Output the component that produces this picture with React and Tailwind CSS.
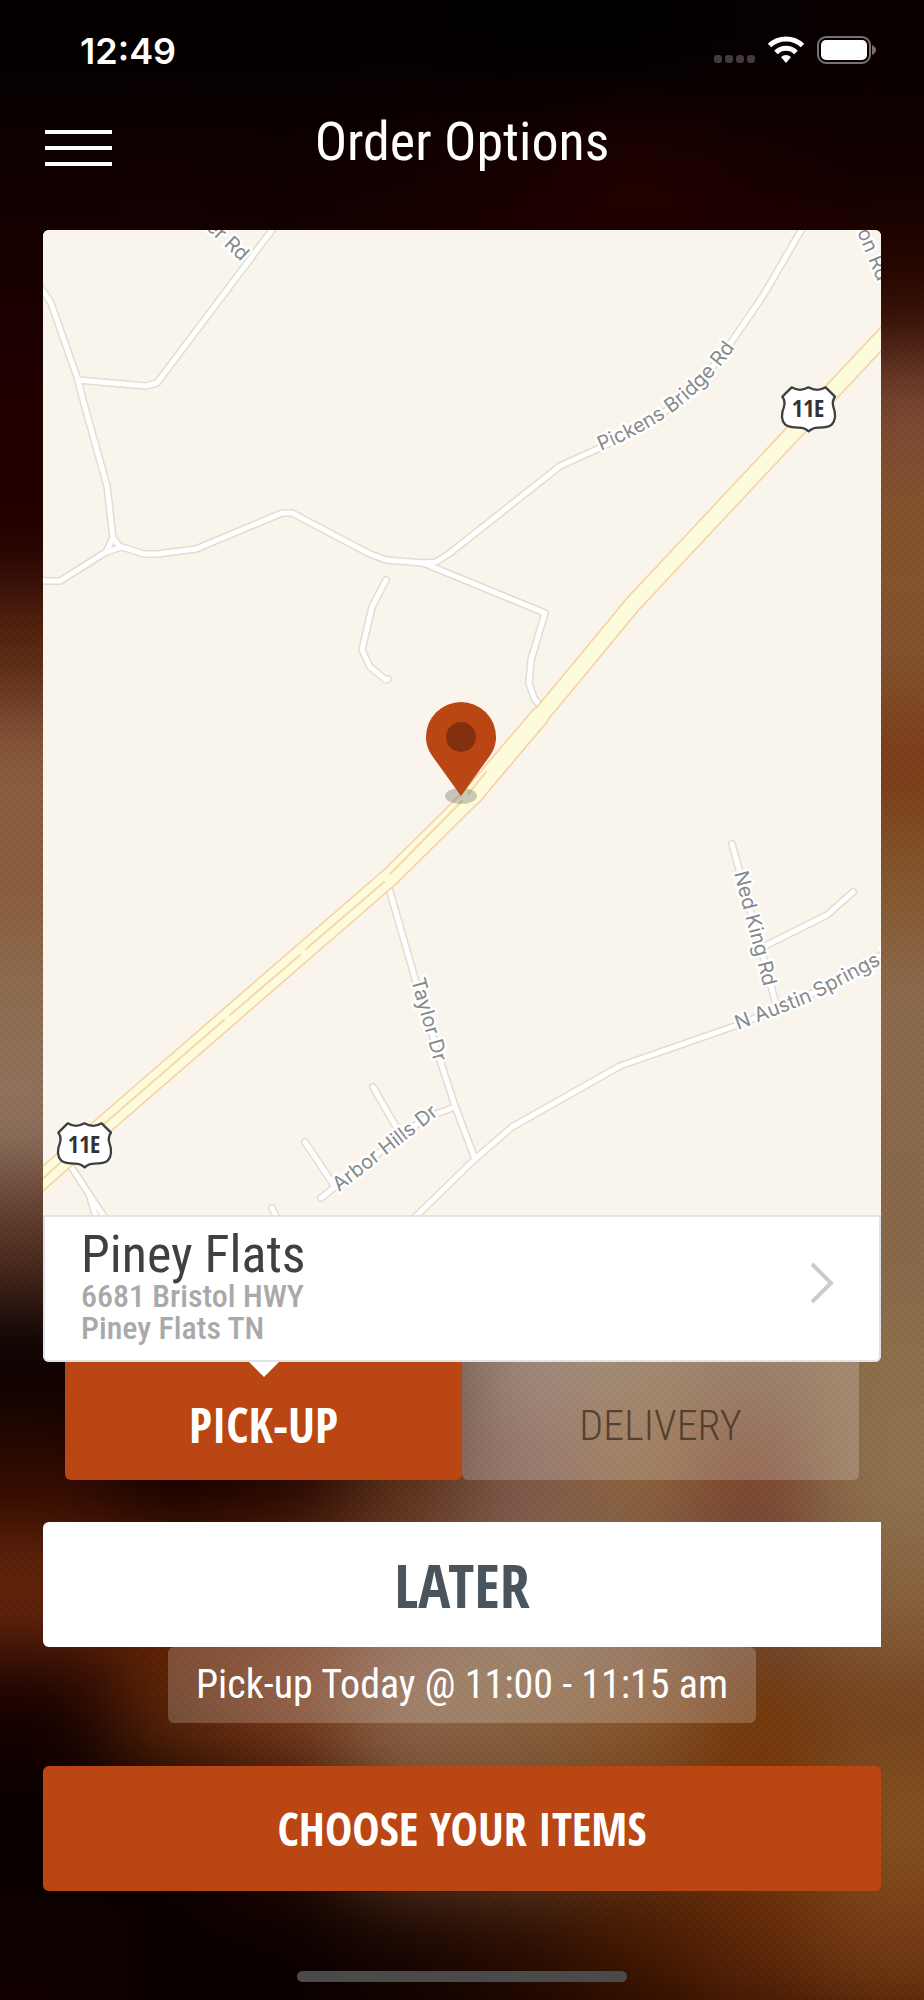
const BACKDROP_ROWS = [
  "040000 040000 040000 040000 020000 020000 060000 0a0000",
  "110000 120000 100000 140000 1a0000 220200 1a0000 120000",
  "1a0000 1a0000 1a0000 1a0000 1e0000 220000 220000 2c0800",
  "240000 240000 240000 240000 300a00 400f00 5a2a14 7e4a34",
  "220000 280200 300a00 400f00 5a2a14 6a3a20 7a4a2c 86552c",
  "5a2810 5a2a14 5a2a14 5a2a14 6a3a20 6a3a20 7a4a2c 845430",
  "8e5e42 7a4a34 6a3a20 6a3a20 6a3a20 7a3a18 7c3814 7c3c18",
  "8c5e3e 7a4a34 6a3a20 6a3a20 6a3a20 7a4a2c 835630 86592f",
  "8f6e52 806048 6a3a20 6a3a20 7a4a2c 7a5a3c 835630 8e6c50",
  "927460 7a5a48 4a2c1c 6a3a20 7a4a2c 7a5a3c 835630 8c6a4e",
  "583424 301810 201008 6a3a20 7a5a4c 8a6a54 846448 8a684a",
  "0a0000 080000 0a0000 3a2010 8c7060 8e7050 846448 8f704c",
  "300a00 140000 240600 5a3018 80584c 90653c 7e442c 907452",
  "6a280c 641f00 6a2a0a 7a4a38 846c54 7c5e50 6a4a40 8a6440",
  "160000 602808 7c3c1c 90684c 8c6440 8c5a30 743808 764420",
  "080000 0e0000 2c0a00 6a4428 70482c 6c3c18 74340a 86521f",
  "100000 0a0000 0a0000 180400 2a0c00 441800 602808 763c16",
  "120000 0a0000 080000 0a0000 100200 1c0600 2c0c00 421800",
].map((row) => row.split(" "));

const CELL_W = 116;
const CELL_H = 118;

function Backdrop() {
  return (
    <svg
      className="absolute inset-0 -z-10 h-full w-full"
      viewBox="0 0 924 2000"
      preserveAspectRatio="none"
      aria-hidden="true"
    >
      <defs>
        <filter
          id="soften"
          filterUnits="userSpaceOnUse"
          x="-200"
          y="-200"
          width="1324"
          height="2400"
          colorInterpolationFilters="sRGB"
        >
          <feGaussianBlur stdDeviation="42" />
        </filter>
        <pattern id="halftone" width="8" height="8" patternUnits="userSpaceOnUse">
          <circle cx="2" cy="2" r="2" fill="#000" />
          <circle cx="6" cy="6" r="2" fill="#000" />
        </pattern>
      </defs>
      <rect width="924" height="2000" fill="#100000" />
      <g filter="url(#soften)">
        {BACKDROP_ROWS.map((row, r) =>
          row.map((color, c) => {
            const left = c === 0 ? -200 : c * CELL_W;
            const right = c === row.length - 1 ? 1124 : (c + 1) * CELL_W + 1;
            const top = r === 0 ? -200 : r * CELL_H;
            const bottom = r === BACKDROP_ROWS.length - 1 ? 2200 : (r + 1) * CELL_H + 1;
            return (
              <rect
                key={`${r}-${c}`}
                x={left}
                y={top}
                width={right - left}
                height={bottom - top}
                fill={`#${color}`}
              />
            );
          })
        )}
      </g>
      <rect width="924" height="2000" fill="url(#halftone)" opacity="0.05" />
    </svg>
  );
}

const ROADS = [
  "M35 280 L43 291 L51 303 L78 380 L83 400 L107 486 L113 538 L106 552",
  "M113 538 L120 547",
  "M78 380 L146 386 L157 383 L278 222",
  "M35 575 L45 581 L60 581 L106 552 L122 547 L144 554 L157 554 L196 549 L282 513 L292 513 L370 554 L386 560 L423 563 L436 562 L450 553 L560 466 L602 447 L650 422 L695 390 L732 341 L763 296 L806 222",
  "M423 563 L545 613 L531 660 L529 683 L534 698 L542 708",
  "M386 580 L372 607 L362 650 L370 667 L386 680 L388 679",
  "M388 885 L416 982 L439 1057 L455 1106 L475 1159",
  "M408 1224 L475 1159 L512 1127 L620 1066 L735 1026 L800 1000 L890 950",
  "M732 844 L776 1004",
  "M765 946 L827 915 L853 892",
  "M321 1198 L335 1187 L380 1152 L425 1118 L455 1107",
  "M305 1142 L335 1187",
  "M373 1087 L399 1132",
  "M272 1208 L280 1224",
  "M68 1162 L89 1194 L109 1224",
  "M89 1194 L98 1224",
];

const LABELS = [
  { id: "pickens", d: "M601 451 C650 430 700 405 748 328", text: "Pickens Bridge Rd" },
  { id: "ned", d: "M734 873 L767 1000", text: "Ned King Rd" },
  { id: "taylor", d: "M411 980 L439 1080", text: "Taylor Dr" },
  { id: "arbor", d: "M339 1192 L460 1098", text: "Arbor Hills Dr" },
  { id: "austin", d: "M738 1030 L810 1002 L930 938", text: "N Austin Springs Rd" },
  { id: "er", d: "M205 228 L266 285", text: "er Rd" },
  { id: "son", d: "M853 222 L890 312", text: "son Rd" },
];

function Shield({ x, y }) {
  return (
    <g transform={`translate(${x} ${y})`}>
      <path
        transform="scale(0.3333)"
        d="M35 52 Q60 67 85 52 Q112 67 137 52 L165 80 Q155 92 160 110 C169 135 166 152 155 164 Q145 173 115 173 Q98 173 86 184 Q74 173 57 173 Q28 173 16 164 C4 152 2 135 12 110 Q17 92 7 80 Z"
        fill="#fff"
        stroke="#3f3f41"
        strokeWidth="7"
        strokeLinejoin="round"
      />
      <text
        x="28"
        y="47"
        textAnchor="middle"
        fill="#333"
        className="font-['Open_Sans_Condensed','Roboto_Condensed',sans-serif] text-[24px] font-bold"
      >
        11E
      </text>
    </g>
  );
}

function StoreMap() {
  return (
    <svg
      className="block h-auto w-full bg-[#f9f4ec]"
      viewBox="43 230 838 985"
      role="img"
      aria-label="Map of the store's location"
    >
      <g fill="none" strokeLinecap="round" strokeLinejoin="round">
        {ROADS.map((d) => (
          <path key={d} d={d} stroke="#e3dcd1" strokeWidth="8" />
        ))}
        {ROADS.map((d) => (
          <path key={d} d={d} stroke="#fff" strokeWidth="5" />
        ))}
        <path d="M898 321 L632 605 L595 650 L473 797" stroke="#f9cf9f" strokeWidth="18" />
        <path d="M540 716 L471 797 L391 876 L97 1131 L30 1190" stroke="#f9cf9f" strokeWidth="20" />
        <path d="M898 321 L632 605 L595 650 L473 797" stroke="#fcfbdc" strokeWidth="15" />
        <path d="M540 716 L471 797 L391 876 L97 1131 L30 1190" stroke="#fcfbdc" strokeWidth="17" />
        <path
          d="M486 772 L468 794 M462 801 L390 874 M384 882 L306 949 M300 955 L230 1015 M224 1020 L97 1130 L30 1190"
          stroke="#f9d8a8"
          strokeWidth="2"
        />
      </g>
      {LABELS.map(({ id, d, text }) => (
        <g key={id}>
          <path id={id} d={d} fill="none" />
          <text
            fill="#86888a"
            stroke="#fff"
            strokeWidth="5"
            strokeLinejoin="round"
            paintOrder="stroke"
            className="font-[Inter,sans-serif] text-[20px]"
          >
            <textPath href={`#${id}`}>{text}</textPath>
          </text>
        </g>
      ))}
      <Shield x={780} y={370} />
      <Shield x={56} y={1106} />
      <ellipse cx="461" cy="796" rx="16" ry="8" fill="#000" fillOpacity="0.2" />
      <path
        d="M461 796 L433 757 C428 750 426 744 426 737 A35 35 0 0 1 496 737 C496 744 494 750 489 757 Z"
        fill="#b94613"
      />
      <circle cx="461" cy="737" r="15" fill="#82310f" />
    </svg>
  );
}

function StatusBar() {
  return (
    <div className="flex h-[102px] items-center justify-between pr-[48px] pl-[80px]">
      <span className="font-[Inter,sans-serif] text-[36px] font-semibold">12:49</span>
      <svg width="164" height="30" viewBox="0 0 164 30" aria-hidden="true">
        <g fill="#433a3b">
          <rect x="2" y="19" width="8" height="8" rx="3" />
          <rect x="13" y="19" width="8" height="8" rx="3" />
          <rect x="24" y="19" width="8" height="8" rx="3" />
          <rect x="35" y="19" width="8" height="8" rx="3" />
        </g>
        <g fill="none" stroke="#fff" strokeWidth="5">
          <path d="M57.5 9.5 A24 24 0 0 1 90.5 9.5" />
          <path d="M64 16.5 A14 14 0 0 1 84 16.5" />
        </g>
        <path d="M74 27 L69 21 Q74 17 79 21 Z" fill="#fff" />
        <rect x="106" y="1" width="52" height="26" rx="8" fill="none" stroke="#767071" strokeWidth="2" />
        <rect x="109" y="4" width="46" height="20" rx="5" fill="#fff" />
        <path d="M160 9 Q164 11 164 14 Q164 17 160 19 Z" fill="#767071" />
      </svg>
    </div>
  );
}

export default function App() {
  return (
    <main className="relative isolate flex min-h-screen flex-col overflow-hidden bg-[#100000] font-['Roboto_Condensed','Open_Sans',sans-serif] text-white">
      <Backdrop />
      <StatusBar />

      <header className="grid h-[128px] grid-cols-[67px_1fr_67px] items-start px-[45px] pt-2">
        <button type="button" aria-label="Open menu" className="flex flex-col gap-3 py-5">
          <span className="h-1 w-full bg-white" />
          <span className="h-1 w-full bg-white" />
          <span className="h-1 w-full bg-white" />
        </button>
        <h1 className="text-center text-[54px] leading-[64px]">Order Options</h1>
      </header>

      <div className="flex flex-col px-[43px]">
        <section className="overflow-hidden rounded-md bg-white">
          <StoreMap />
          <a
            href="#store"
            className="flex items-center justify-between rounded-b-md border-2 border-[#e0e4e6] pt-[13px] pr-[44px] pb-4 pl-[36px]"
          >
            <span className="flex flex-col">
              <span className="text-[52px] leading-[50px] text-[#404040]">Piney Flats</span>
              <span className="text-[32px] leading-[32px] font-medium text-[#a9a9a9]">
                6681 Bristol HWY
                <br />
                Piney Flats TN
              </span>
            </span>
            <svg className="mb-2" width="26" height="42" viewBox="0 0 26 42" fill="none" aria-hidden="true">
              <path d="M3 2 L22 21 L3 40" stroke="#cbcbcb" strokeWidth="4" />
            </svg>
          </a>
        </section>

        <div role="tablist" aria-label="Order type" className="mx-[22px] grid h-[118px] grid-cols-2">
          <button
            type="button"
            role="tab"
            aria-selected="true"
            className="relative rounded-b-md bg-[#b94613] pt-2 font-['Open_Sans_Condensed','Roboto_Condensed',sans-serif] text-[48px] font-bold"
          >
            PICK-UP
            <svg
              className="absolute top-0 left-1/2 -translate-x-1/2"
              width="30"
              height="15"
              viewBox="0 0 30 15"
              aria-hidden="true"
            >
              <path d="M0 0 H30 L15 15 Z" fill="#fff" />
            </svg>
          </button>
          <button
            type="button"
            role="tab"
            aria-selected="false"
            className="rounded-b-md bg-white/20 pt-2 text-[42px] font-light text-[#54402f]"
          >
            DELIVERY
          </button>
        </div>

        <button
          type="button"
          className="mt-[42px] h-[125px] rounded-l-md bg-white font-['Open_Sans_Condensed','Roboto_Condensed',sans-serif] text-[60px] font-bold text-[#4a545c]"
        >
          LATER
        </button>
        <p className="flex h-[76px] items-center self-center rounded-md bg-white/20 px-7 text-[40px]">
          Pick-up Today @ 11:00 - 11:15 am
        </p>
        <button
          type="button"
          className="mt-[43px] h-[125px] rounded-md bg-[#b94613] font-['Open_Sans_Condensed','Roboto_Condensed',sans-serif] text-[46px] font-bold"
        >
          CHOOSE YOUR ITEMS
        </button>
      </div>

      <div className="mt-auto flex justify-center pt-12 pb-[18px]">
        <span className="h-[11px] w-[330px] rounded-full bg-[#4a4a4a]" />
      </div>
    </main>
  );
}
